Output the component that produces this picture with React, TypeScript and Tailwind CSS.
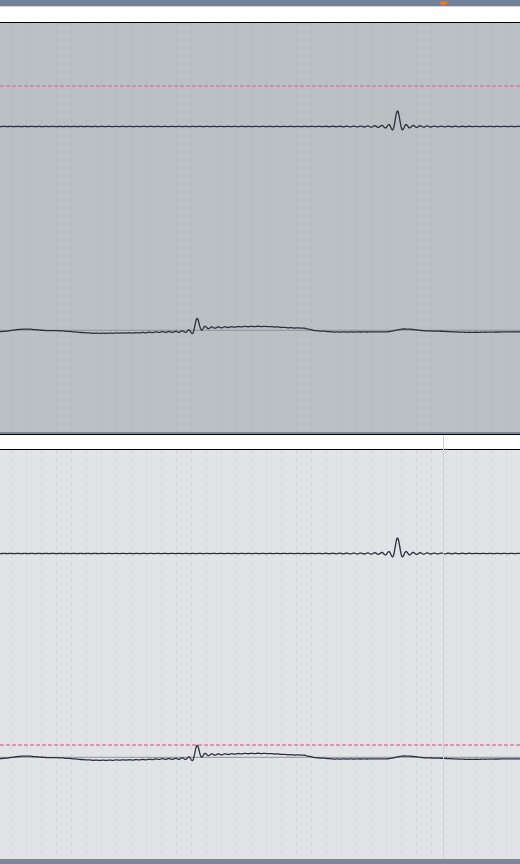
import React from 'react';

const W = 520;
const H = 409;

const sinc = (t: number) => (Math.abs(t) < 1e-6 ? 1 : Math.sin(Math.PI * t) / (Math.PI * t));

// cosine interpolation through [x, y] control points
const level = (pts: number[][], x: number) => {
  for (let i = 0; i < pts.length - 1; i++) {
    const [x0, y0] = pts[i];
    const [x1, y1] = pts[i + 1];
    if (x >= x0 && x <= x1) {
      const m = (1 - Math.cos(((x - x0) / (x1 - x0)) * Math.PI)) / 2;
      return y0 + (y1 - y0) * m;
    }
  }
  return pts[pts.length - 1][1];
};

const drift = [
  [0, 1.2], [25, -1.2], [50, 0.3], [100, 3], [130, 2.6], [170, 1.6], [192, 1],
  [202, -2.6], [260, -3.9], [300, -2.3], [320, 0.7], [335, 1.7], [385, 1.6],
  [405, -1.3], [430, 0.7], [470, 2], [520, 1.5],
];

const buildPath = (fn: (x: number) => number) => {
  let d = '';
  for (let x = 0; x <= W; x += 0.5) {
    d += (x === 0 ? 'M' : 'L') + x.toFixed(1) + ' ' + fn(x).toFixed(2) + ' ';
  }
  return d;
};

const pulseA = buildPath((x) => 103.5 - 15.5 * sinc((x - 397.5) / 3.5));
const pulseB = buildPath((x) => 307.3 + level(drift, x) - 11 * sinc((x - 197) / 3.3));

const gridXs = Array.from({ length: 35 }, (_, k) => 11.5 + 15 * k);

type PanelProps = {
  bg: string;
  grid: string;
  markerY: number;
};

const Panel: React.FC<PanelProps> = ({ bg, grid, markerY }) => (
  <div className={`h-[409px] w-full ${bg}`}>
    <svg width={W} height={H} viewBox={`0 0 ${W} ${H}`} className="block">
      {gridXs.map((x) => (
        <line key={x} x1={x} y1={0} x2={x} y2={H} stroke={grid} strokeWidth={1} strokeDasharray="4 4" />
      ))}
      <line x1={0} y1={307.3} x2={W} y2={307.3} stroke="#8d939b" strokeWidth={1} />
      <line x1={0} y1={markerY} x2={W} y2={markerY} stroke="#e27aa3" strokeWidth={1.6} strokeDasharray="4 2" />
      <path d={pulseA} fill="none" stroke="#2b303c" strokeWidth={1.3} strokeLinejoin="round" />
      <path d={pulseB} fill="none" stroke="#2b303c" strokeWidth={1.3} strokeLinejoin="round" />
    </svg>
  </div>
);

const App: React.FC = () => {
  return (
    <div className="w-[520px] h-[864px] overflow-hidden bg-white flex flex-col">
      <div className="relative h-[6px] bg-[#74819a]">
        <svg width={12} height={6} viewBox="0 0 12 6" className="absolute left-[438px] top-0">
          <polygon points="1.5,1.5 9,1.5 9,3 5.25,6 1.5,3" fill="#f07a1c" />
        </svg>
      </div>
      <div className="h-px bg-[#cdd1d9]" />
      <div className="h-[15px] bg-white border-b border-black box-content" />
      <Panel bg="bg-[#bbc0c4]" grid="#b1b6bb" markerY={63} />
      <div className="h-[2px] bg-[#7a869b]" />
      <div className="relative">
        <div className="h-px bg-black" />
        <div className="h-[14px] bg-white" />
        <div className="h-px bg-black" />
        <Panel bg="bg-[#e1e3e7]" grid="#d3d6db" markerY={295} />
        <div className="absolute left-[443px] top-px bottom-0 w-px bg-[#f4c7a0]" />
      </div>
      <div className="h-[5px] bg-[#7d889c]" />
    </div>
  );
};

export default App;
